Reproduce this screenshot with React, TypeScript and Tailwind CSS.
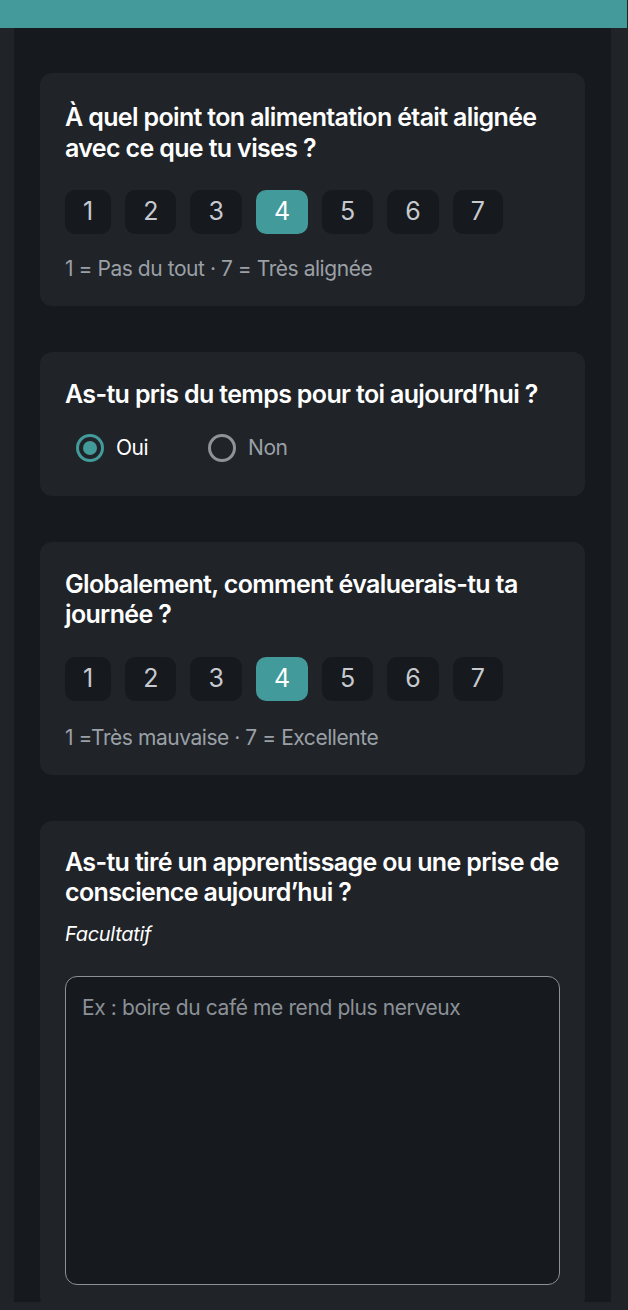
import React from 'react';

const font = { fontFamily: 'Inter, "Noto Sans", sans-serif' };

const titleClass = 'text-[25px] leading-[30.5px] font-semibold text-white tracking-[-0.65px]';

interface ScaleProps {
  selected: number;
  legend: string;
  legendGap: string;
}

const Scale: React.FC<ScaleProps> = ({ selected, legend, legendGap }) => (
  <>
    <div className="mt-[27px] flex gap-[14px]">
      {[1, 2, 3, 4, 5, 6, 7].map((n) => (
        <div
          key={n}
          className={
            n === selected
              ? 'h-[44px] px-[18px] rounded-[10px] bg-[#439a9b] text-white flex items-center justify-center text-[25px]'
              : 'h-[44px] px-[18px] rounded-[10px] bg-[#16191d] text-[#c6cacf] flex items-center justify-center text-[25px]'
          }
        >
          {n}
        </div>
      ))}
    </div>
    <p className={`${legendGap} text-[21px] leading-[28px] text-[#9aa0a6] tracking-[-0.45px]`}>{legend}</p>
  </>
);

export default function App() {
  return (
    <div className="min-h-[1310px] bg-[#202327]" style={font}>
      <div className="h-[28px] w-[627px] bg-[#449a9b]" />
      <div className="ml-[14px] w-[597px] h-[1274px] bg-[#16191d] overflow-hidden px-[26px] pt-[45px] flex flex-col gap-[46px]">
        {/* Alimentation */}
        <div className="rounded-xl bg-[#202328] px-[25px] pt-[29px] pb-[23px]">
          <h2 className={titleClass}>
            À quel point ton alimentation était alignée avec ce que tu vises ?
          </h2>
          <Scale selected={4} legend="1 = Pas du tout · 7 = Très alignée" legendGap="mt-[21px]" />
        </div>

        {/* Temps pour soi */}
        <div className="rounded-xl bg-[#202328] px-[25px] pt-[27px] pb-[34px]">
          <h2 className={titleClass}>As-tu pris du temps pour toi aujourd’hui ?</h2>
          <div className="mt-[24px] h-[28px] flex items-center gap-[60px] pl-[11px]">
            <div className="flex items-center gap-[12px]">
              <span className="w-[28px] h-[28px] rounded-full border-[3px] border-[#439a9b] flex items-center justify-center">
                <span className="w-[14px] h-[14px] rounded-full bg-[#439a9b]" />
              </span>
              <span className="text-[21px] text-white tracking-[-0.5px]">Oui</span>
            </div>
            <div className="flex items-center gap-[12px]">
              <span className="w-[28px] h-[28px] rounded-full border-[3px] border-[#8e9398]" />
              <span className="text-[21px] text-[#9aa0a6] tracking-[-0.5px]">Non</span>
            </div>
          </div>
        </div>

        {/* Journée */}
        <div className="rounded-xl bg-[#202328] px-[25px] pt-[27px] pb-[23px]">
          <h2 className={titleClass}>Globalement, comment évaluerais-tu ta journée ?</h2>
          <Scale selected={4} legend="1 =Très mauvaise · 7 = Excellente" legendGap="mt-[23px]" />
        </div>

        {/* Apprentissage */}
        <div className="rounded-xl bg-[#202328] px-[25px] pt-[26px] pb-[24px]">
          <h2 className={titleClass}>
            As-tu tiré un apprentissage ou une prise de conscience aujourd’hui ?
          </h2>
          <p className="mt-[12px] text-[20px] leading-[28px] italic text-white tracking-[-0.3px]">Facultatif</p>
          <textarea
            className="mt-[28px] block w-full h-[309px] resize-none rounded-xl border-[1.5px] border-[#8c9196] bg-[#16191d] px-[16px] py-[18px] text-[21px] leading-[26px] text-white placeholder:text-[#8b9197] tracking-[-0.4px] outline-none"
            placeholder="Ex : boire du café me rend plus nerveux"
          />
        </div>
      </div>
    </div>
  );
}
